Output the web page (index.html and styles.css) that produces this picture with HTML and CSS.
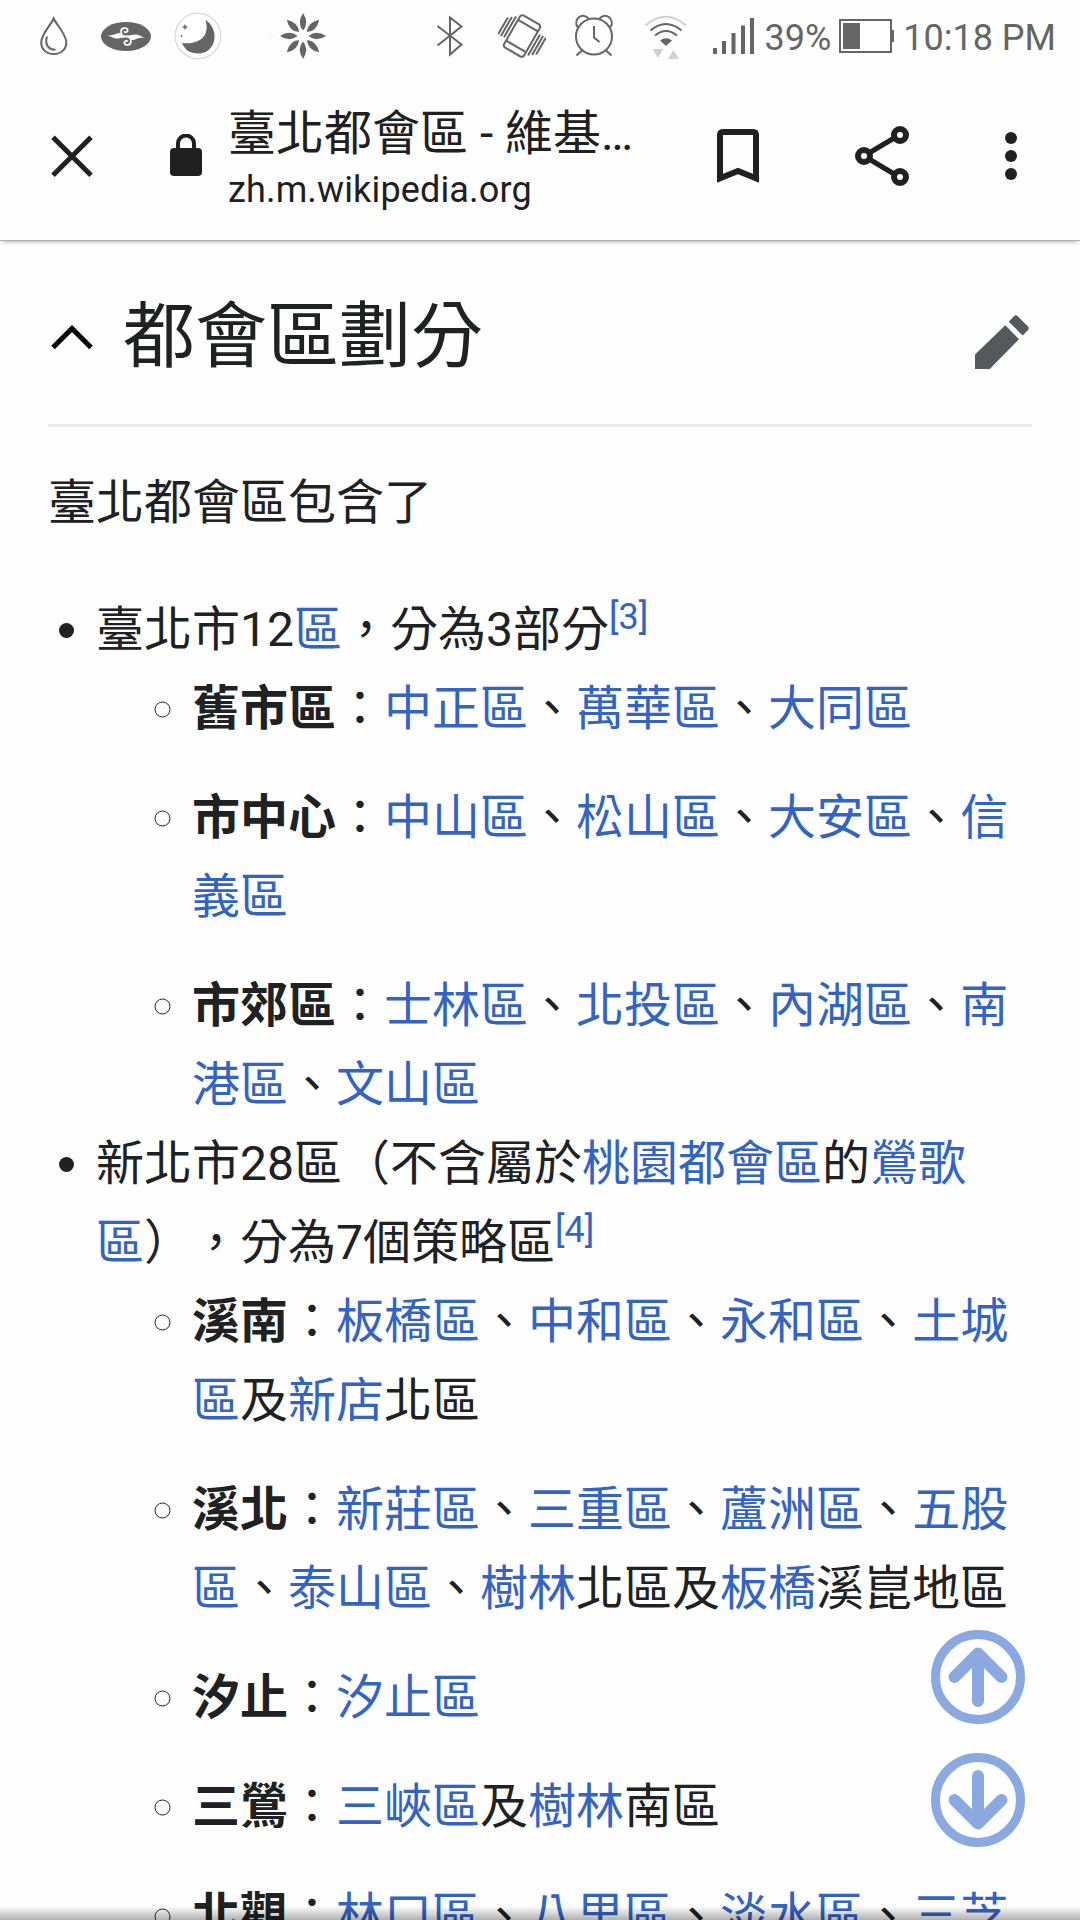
FILE: index.html
```
<!DOCTYPE html>
<html lang="zh-Hant">
<head>
    <meta charset="utf-8">
    <title>臺北都會區 - 維基百科</title>
    <link rel="stylesheet" href="styles.css">
</head>
<body>
    <div class="statusbar">
        <div class="notifications">
            <svg width="48" height="48" viewBox="0 0 48 48" fill="none" stroke="#656565" stroke-width="2">
                <path d="M23.7 6.500C21 13 11.200 22 11.200 30.500C11.200 37.500 16.500 42 23.700 42S36.300 37.500 36.300 30.500C36.300 22 26.500 13 23.700 6.500Z"/>
                <path d="M17 24.500C14.500 32 18 37.500 25.500 37.700"/>
            </svg>
            <svg width="50" height="48" viewBox="0 0 50 48" class="wide">
                <ellipse cx="25" cy="24.500" rx="25" ry="14.500" fill="#656565"/>
                <g id="swirl">
                    <path d="M4.500 23.200C10 24.200 13 22.500 16 21.500C18 20.800 19 20.800 20.500 21.500C22 23 23.500 23.500 25 23.500V25.500C21 25 17 27.300 13.500 26.200C10.500 25.300 8.500 23.700 4.500 23.200Z" fill="#fff"/>
                    <path d="M20.800 22C18 16 25 14.500 26.500 17.500C27.300 20 24 21.300 23.300 19.300" fill="none" stroke="#fff" stroke-width="1.700"/>
                </g>
                <use href="#swirl" transform="rotate(180 25 24.500)"/>
            </svg>
            <svg width="48" height="48" viewBox="0 0 48 48">
                <circle cx="24" cy="24" r="22.700" fill="#fff" stroke="#dcdcdc" stroke-width="1.500"/>
                <path d="M31.500 8C46 17 43 41.500 24 41.500C16 41.500 11 38 8 31C27 33 36 23 31.500 8Z" fill="#656565"/>
                <path d="M11 12.500Q11.300 14.700 13.500 15Q11.300 15.300 11 17.500Q10.700 15.300 8.500 15Q10.700 14.700 11 12.500ZM7 23.500h1.200v1.200h-1.200Z" fill="#656565" stroke="#656565" stroke-width=".5"/>
            </svg>
            <svg width="48" height="48" viewBox="0 0 48 48" fill="none" stroke="#fafafa">
                <rect x="7" y="11" width="32" height="27" rx="3"/>
                <circle cx="24" cy="24" r="3.500" fill="#fafafa"/>
            </svg>
            <svg width="48" height="48" viewBox="-24 -24 48 48" class="flower" fill="#656565">
                <g id="petals">
                    <path d="M0 -23Q6.500 -13 0 -5.500Q-6.500 -13 0 -23Z"/>
                    <path d="M0 23Q6.500 13 0 5.500Q-6.500 13 0 23Z"/>
                    <path d="M-23 0Q-13 6.500 -5.500 0Q-13 -6.500 -23 0Z"/>
                    <path d="M23 0Q13 6.500 5.500 0Q13 -6.500 23 0Z"/>
                </g>
                <use href="#petals" transform="rotate(45)"/>
            </svg>
        </div>
        <div class="system">
            <svg width="48" height="48" viewBox="0 0 48 48" fill="none" stroke="#656565" stroke-width="2">
                <path d="M11.500 14L35.500 32.500L24 42.500V5.500L35.500 14.500L11.500 33.500"/>
            </svg>
            <svg width="48" height="48" viewBox="0 0 48 48" fill="none" stroke="#656565" stroke-width="2">
                <g transform="rotate(30 24 24)">
                    <rect x="12.500" y="5.500" width="23" height="37" rx="3"/>
                    <path d="M12.500 12H35.500M12.500 36H35.500M9 10V34M5.700 12.500V34.500M2.500 15V34.500M39 14V38M42.300 13.500V35.500M45.500 13.500V33"/>
                </g>
            </svg>
            <svg width="48" height="48" viewBox="0 0 48 48" fill="none" stroke="#656565" stroke-width="2">
                <circle cx="24" cy="24.500" r="18"/>
                <path d="M24 14V25.500L29.500 30M12 38.500L6.500 43.500M36 38.500L41.500 43.500M7.500 15C3 8 12 -1 18.500 6.500M40.500 15C45 8 36 -1 29.500 6.500"/>
            </svg>
            <svg width="48" height="48" viewBox="0 0 48 48" fill="none" stroke="#656565" stroke-width="2">
                <path d="M3.500 13.500Q23.500 -4 44 13.500" stroke="#d0d0d0"/>
                <path d="M8.500 18.500Q24 5.500 39.500 18.500M13 23.500Q24 14.500 35 23.500"/>
                <path d="M18 28.500Q24 24 30 28.500L24 34Z" fill="#656565" stroke="none"/>
                <path d="M10.500 37H21L16 46ZM26 47H37L31.500 38Z" fill="#d0d0d0" stroke="none"/>
            </svg>
            <svg width="41" height="36" viewBox="0 0 41 36" class="signal" fill="#656565">
                <path d="M0 30h4v6h-4ZM9 23h4v13h-4ZM18.500 15h4v21h-4ZM28 7.500h4v28.500h-4ZM37 0h4v36h-4Z"/>
            </svg>
            <span class="percent">39%</span>
            <svg width="56" height="34" viewBox="0 0 56 34" class="battery">
                <rect x="1" y="1" width="51" height="32" fill="#fff" stroke="#656565" stroke-width="2"/>
                <path d="M4 4h17v26h-17ZM52 11h3v12h-3Z" fill="#656565"/>
            </svg>
            <span class="clock">10:18 PM</span>
        </div>
    </div>

    <div class="toolbar">
        <svg width="48" height="48" viewBox="0 0 48 48" fill="none" stroke="#202020" stroke-width="5">
            <path d="M5 5.200L43 43.200M43 5.200L5 43.200"/>
        </svg>
        <svg width="32" height="42" viewBox="0 0 32 42" class="lock">
            <path d="M8 16V9.500a8 8 0 0 1 16 0V16" fill="none" stroke="#202020" stroke-width="4"/>
            <rect y="14" width="32" height="28" rx="4" fill="#202020"/>
        </svg>
        <div class="page">
            <div class="title">臺北都會區 - 維基百科</div>
            <div class="url">zh.m.wikipedia.org</div>
        </div>
        <svg width="42" height="54" viewBox="0 0 42 54" fill="none" stroke="#202020" stroke-width="6">
            <path d="M3 49.300V6Q3 3 6 3H36Q39 3 39 6V49.300L21 42Z"/>
        </svg>
        <svg width="54" height="60" viewBox="0 0 54 60" class="share" fill="none" stroke="#202020" stroke-width="6">
            <path d="M40 11.500L14 27M14 33L40 48.500" stroke-width="5"/>
            <circle cx="45" cy="9" r="6"/>
            <circle cx="9" cy="30" r="6"/>
            <circle cx="45" cy="51" r="6"/>
        </svg>
        <svg width="12" height="48" viewBox="0 0 12 48" class="more" fill="#202020">
            <circle cx="6" cy="6" r="6"/>
            <circle cx="6" cy="24" r="6"/>
            <circle cx="6" cy="42" r="6"/>
        </svg>
    </div>

    <div class="content">
        <div class="heading">
            <svg width="48" height="48" viewBox="0 0 48 48" class="caret" fill="none" stroke="#000" stroke-width="5">
                <path d="M5 34.500L24 15.500L43 34.500"/>
            </svg>
            <h2>都會區劃分</h2>
            <svg width="54" height="54" viewBox="0 0 54 54" class="edit" fill="#54595d">
                <path d="M0 39.500L30.300 10.300L44 24.300L14.700 54H0Z"/>
                <path d="M33.700 6.700L39 1.200Q40.500 -.5 42.500 1L53 11.500Q54.500 13 53 15L47.700 20.500Z"/>
            </svg>
        </div>

        <p>臺北都會區包含了</p>

        <ul>
            <li>臺北市12<a>區</a>，分為3部分<sup><a>[3]</a></sup>
                <ul>
                    <li><b>舊市區</b>：<a>中正區</a>、<a>萬華區</a>、<a>大同區</a></li>
                    <li><b>市中心</b>：<a>中山區</a>、<a>松山區</a>、<a>大安區</a>、<a>信義區</a></li>
                    <li><b>市郊區</b>：<a>士林區</a>、<a>北投區</a>、<a>內湖區</a>、<a>南港區</a>、<a>文山區</a></li>
                </ul>
            </li>
            <li>新北市28區（不含屬於<a>桃園都會區</a>的<a>鶯歌區</a>），分為7個策略區<sup><a>[4]</a></sup>
                <ul>
                    <li><b>溪南</b>：<a>板橋區</a>、<a>中和區</a>、<a>永和區</a>、<a>土城區</a>及<a>新店</a>北區</li>
                    <li><b>溪北</b>：<a>新莊區</a>、<a>三重區</a>、<a>蘆洲區</a>、<a>五股區</a>、<a>泰山區</a>、<a>樹林</a>北區及<a>板橋</a>溪崑地區</li>
                    <li><b>汐止</b>：<a>汐止區</a></li>
                    <li><b>三鶯</b>：<a>三峽區</a>及<a>樹林</a>南區</li>
                    <li><b>北觀</b>：<a>林口區</a>、<a>八里區</a>、<a>淡水區</a>、<a>三芝區</a></li>
                </ul>
            </li>
        </ul>
    </div>

    <div class="jump">
        <svg width="94" height="94" viewBox="0 0 94 94">
            <circle cx="47" cy="47" r="42.500"/>
            <path d="M47 71V26M23.500 47L47 23.500L70.500 47"/>
        </svg>
        <svg width="94" height="94" viewBox="0 0 94 94">
            <circle cx="47" cy="47" r="42.500"/>
            <path d="M47 23V68M23.500 47L47 70.500L70.500 47"/>
        </svg>
    </div>
    <div class="bottom-shadow"></div>
</body>
</html>
```

FILE: styles.css
```
body {
    margin: 0;
    height: 1920px;
    overflow: hidden;
    background-color: #fefefe;
    color: #202122;
    font-family: Roboto, "Noto Sans CJK TC", sans-serif;
    font-size: 48px;
    line-height: 79px;
    text-spacing-trim: space-all;
}
svg {
    display: block;
    flex: none;
}
.statusbar {
    display: flex;
    justify-content: space-between;
    height: 72px;
    padding: 0 24px 0 30px;
    color: #656565;
    font-size: 36px;
    line-height: 72px;
}
.notifications,
.system {
    display: flex;
    align-items: center;
    gap: 24px;
}
.wide {
    margin: 0 -1px;
}
.flower {
    margin-left: -39px;
}
.signal {
    margin-left: -1px;
}
.percent {
    margin-left: -14px;
    padding-top: 4px;
}
.battery {
    margin-left: -16px;
}
.clock {
    margin-left: -16px;
    padding-top: 4px;
}
.toolbar {
    display: flex;
    align-items: center;
    box-sizing: border-box;
    height: 169px;
    padding: 0 63px 0 48px;
    border-bottom: 1px solid #b0b0b0;
    box-shadow: 0 4px 4px -3px rgba(0, 0, 0, 0.3);
    color: #202020;
}
.lock {
    margin: -2px 26px 0 74px;
}
.page {
    width: 412px;
    margin-right: 77px;
}
.title {
    overflow: hidden;
    height: 62px;
    line-height: 62px;
    white-space: nowrap;
    text-overflow: ellipsis;
}
.url {
    margin: 3px 0 -3px;
    font-size: 36px;
    line-height: 44px;
    letter-spacing: 0.15px;
}
.share {
    margin-left: 96px;
}
.more {
    margin-left: 96px;
}
.content {
    padding: 0 48px;
}
.heading {
    display: flex;
    align-items: center;
    height: 183px;
    border-bottom: 3px solid #eaecf0;
}
.caret {
    margin-top: 9px;
}
.heading h2 {
    flex: 1;
    margin: 8px 0 0 27px;
    font-size: 72px;
    font-weight: 400;
    line-height: 94px;
}
.edit {
    margin: 19px 3px 0 0;
}
p {
    margin: 36px 0 48px;
}
ul {
    margin: 0;
    padding-left: 48px;
    list-style-type: disc;
}
ul ul {
    padding-left: 96px;
    list-style-type: circle;
}
ul ul li {
    margin-bottom: 30px;
}
ul ul li:last-child {
    margin-bottom: 0;
}
a {
    color: #3364c4;
}
sup {
    font-size: 36px;
    line-height: 1;
    vertical-align: super;
}
.jump {
    position: fixed;
    top: 1630px;
    right: 55px;
    display: flex;
    flex-direction: column;
    gap: 29px;
    fill: none;
    stroke: #8aa9e0;
    stroke-width: 9;
}
.jump path {
    stroke-width: 12;
    stroke-linecap: round;
    stroke-linejoin: round;
}
.bottom-shadow {
    position: fixed;
    bottom: 0;
    left: 0;
    right: 0;
    height: 14px;
    background: linear-gradient(rgba(0, 0, 0, 0), rgba(0, 0, 0, 0.3));
}
```
